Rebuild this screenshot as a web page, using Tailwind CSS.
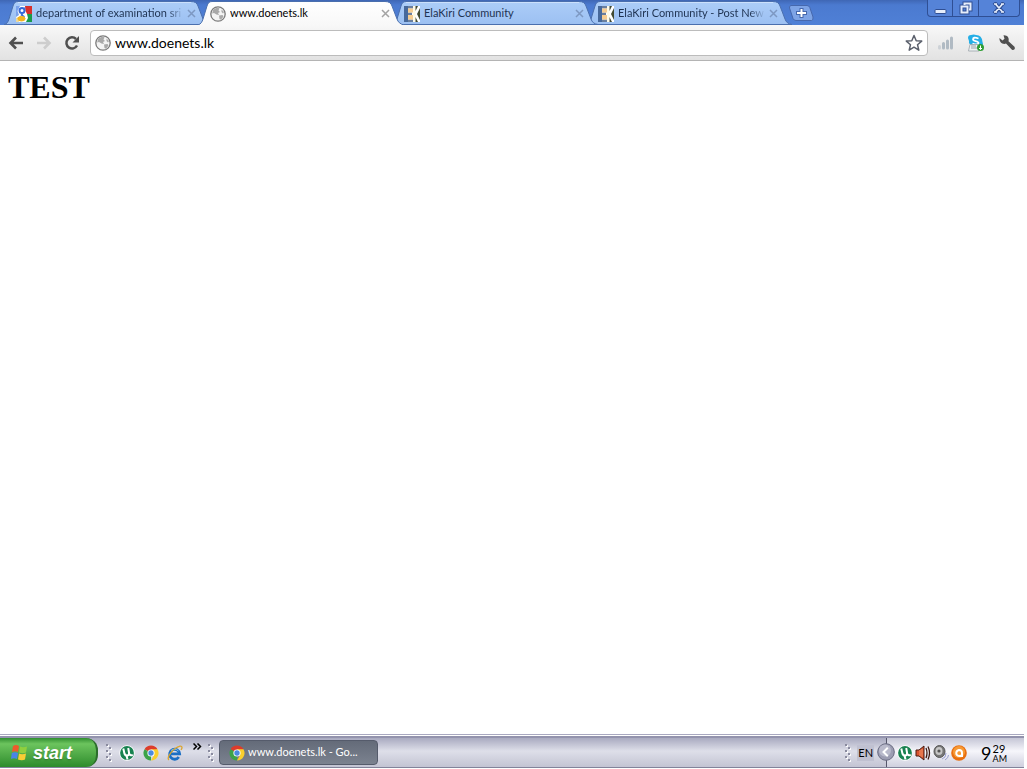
<!DOCTYPE html>
<html lang="en">
<head>
    <meta charset="UTF-8" />
    <meta name="viewport" content="width=device-width, initial-scale=1.0" />
    <title>www.doenets.lk</title>
    <script src="https://cdn.jsdelivr.net/npm/@tailwindcss/browser@4"></script>
</head>
<body class="min-h-screen flex flex-col bg-white pr-[3px] pb-px overflow-hidden font-[Lato,sans-serif]">

<!-- shared shapes -->
<svg class="absolute size-0">
    <defs>
        <linearGradient id="tab-blue" x1="0" y1="0" x2="0" y2="1">
            <stop offset="0" stop-color="#accdf8" />
            <stop offset="1" stop-color="#9cc0f2" />
        </linearGradient>
        <linearGradient id="tab-white" x1="0" y1="0" x2="0" y2="1">
            <stop offset="0" stop-color="#ffffff" />
            <stop offset="1" stop-color="#f8f8f8" />
        </linearGradient>
        <symbol id="tab" viewBox="0 0 206 25">
            <path d="M0 24.500 C3 24 4 22 5 19 L9 6 C10 3 11 1.500 14 1.500 H187 C191 1.500 193 3 194 6 L199 19 C200 22 202 24 206 24.500 Z" stroke="#4a6fae" stroke-width="1" />
            <path d="M14 2.500 H187" stroke="#d3e5fd" stroke-opacity=".8" fill="none" />
        </symbol>
        <symbol id="tab-active" viewBox="0 0 206 25">
            <path d="M0 25 C3 24 4 22 5 19 L9 6 C10 3 11 1.500 14 1.500 H187 C191 1.500 193 3 194 6 L199 19 C200 22 202 24 206 25" stroke="#4a6fae" stroke-width="1" />
        </symbol>
        <symbol id="globe" viewBox="0 0 16 16">
            <circle cx="8" cy="8" r="7.200" fill="#f4f4f4" stroke="#7b7b7b" stroke-width="1.300" />
            <path d="M3 4 C5 2 8 1.600 9.500 2.500 L8.500 4.500 L10 6 L8 7 L9 9 L6.500 8.500 L4 7 L2.200 7.500 Z M9 9.500 L12.500 9 L13.500 10.500 L11 13.800 L9.500 13 Z M11.500 3.500 L14 6 L13 7.500 L11.500 6 Z" fill="#a9a9a9" />
        </symbol>
        <symbol id="ek" viewBox="0 0 16 16">
            <rect width="16" height="16" fill="#fff" />
            <path d="M0 0 H4 V16 H0 Z" fill="#47699b" />
            <path d="M4 0 H9 V2.500 H4 Z M4 6.500 H8 V9 H4 Z M4 13.500 H9 V16 H4 Z" fill="#6a7f9e" />
            <path d="M4 2.500 H9 V6.500 H4 Z M4 9 H9 V13.500 H4 Z" fill="#f6cd92" />
            <path d="M9 0 H11.500 V16 H9 Z" fill="#fffbe8" />
            <path d="M11.500 0 H14 L11.500 5 Z M16 2 V14 L13 8 Z M11.500 16 V11 L14 16 Z" fill="#424a32" />
        </symbol>
        <symbol id="close" viewBox="0 0 9 9">
            <path d="M1 1 L8 8 M8 1 L1 8" stroke="currentColor" stroke-width="1.500" />
        </symbol>
        <symbol id="chrome" viewBox="0 0 16 16">
            <path d="M8 8 L1.500 4.250 A7.500 7.500 0 0 1 14.500 4.250 Z" fill="#dd3c2b" />
            <path d="M8 8 L8 15.500 A7.500 7.500 0 0 1 1.500 4.250 Z" fill="#3da349" />
            <path d="M8 4.250 H14.500 A7.500 7.500 0 0 1 8 15.500 L11.200 9.800 Z" fill="#f9cf2d" />
            <circle cx="8" cy="8" r="3.600" fill="#fff" />
            <circle cx="8" cy="8" r="2.700" fill="#4a8be0" />
        </symbol>
        <symbol id="utorrent" viewBox="0 0 16 16">
            <circle cx="8" cy="8" r="7.700" fill="#fff" />
            <circle cx="8" cy="8" r="6.900" fill="#188250" />
            <path d="M4.300 3.500 L5.300 8 Q6 11 8.500 10.500 Q10.500 10 10 7.500 L9.200 3 M10 8 Q10.800 11 13.800 10 M7.500 10.500 L8.500 14.500" stroke="#fff" stroke-width="2" fill="none" />
        </symbol>
        <symbol id="grip" viewBox="0 0 6 20">
            <path d="M1 2h2v2h-2z M4 5h2v2h-2z M1 8h2v2h-2z M4 11h2v2h-2z M1 14h2v2h-2z M4 17h2v2h-2z" fill="#fff" fill-opacity=".9" />
            <path d="M0 1h2v2h-2z M3 4h2v2h-2z M0 7h2v2h-2z M3 10h2v2h-2z M0 13h2v2h-2z M3 16h2v2h-2z" fill="#8a8b9f" />
        </symbol>
    </defs>
</svg>

<!-- tab strip -->
<header class="flex h-[25px] items-start bg-linear-to-b from-[#3f67b5] via-[#4b7ad0] via-20% to-[#4f80d6] pl-1">
    <nav class="flex text-[11px] text-[#1f3352]">
        <div class="relative z-30 flex h-[25px] w-[206px] items-center gap-1 pt-0.5 pr-[14px] pl-3">
            <svg class="absolute inset-0 h-full w-full" fill="url(#tab-blue)"><use href="#tab" /></svg>
            <svg class="relative size-4 shrink-0" viewBox="0 0 16 16">
                <rect width="16" height="16" fill="#fff" />
                <path d="M0 0 H4 L1.500 5 L3 9 L0 11 Z" fill="#7ba3ec" />
                <path d="M9 0 H16 V8 H11 L9.500 5 Z" fill="#d9302c" />
                <path d="M11 8 H16 V16 H10 L12 12 Z" fill="#1a9a4b" />
                <path d="M0 12 L2 11 L3 16 H0 Z" fill="#e9d9a0" />
                <path d="M8 2 H9.500" stroke="#3569d8" />
                <circle cx="6" cy="4.500" r="2.500" fill="#fff" stroke="#3569d8" stroke-width="2" />
                <path d="M6.500 7.500 L5.500 9 L8.500 10.800" stroke="#3569d8" stroke-width="1.500" fill="none" />
                <ellipse cx="5.500" cy="12.700" rx="3.600" ry="2.300" fill="#f3b41f" stroke="#f3b41f" />
            </svg>
            <a href="#" class="relative min-w-0 flex-1 overflow-hidden whitespace-nowrap mask-r-from-90%">department of examination sri</a>
            <button aria-label="Close tab" class="relative text-[#7d98c2]"><svg class="size-[9px]"><use href="#close" /></svg></button>
        </div>
        <div class="relative z-40 -ml-3 flex h-[25px] w-[206px] items-center gap-1 pt-0.5 pr-[14px] pl-3 text-black">
            <svg class="absolute inset-0 h-full w-full" fill="url(#tab-white)"><use href="#tab-active" /></svg>
            <svg class="relative size-4 shrink-0"><use href="#globe" /></svg>
            <a href="#" class="relative min-w-0 flex-1 overflow-hidden whitespace-nowrap">www.doenets.lk</a>
            <button aria-label="Close tab" class="relative text-[#a3a3a3]"><svg class="size-[9px]"><use href="#close" /></svg></button>
        </div>
        <div class="relative z-20 -ml-3 flex h-[25px] w-[206px] items-center gap-1 pt-0.5 pr-[14px] pl-3">
            <svg class="absolute inset-0 h-full w-full" fill="url(#tab-blue)"><use href="#tab" /></svg>
            <svg class="relative size-4 shrink-0"><use href="#ek" /></svg>
            <a href="#" class="relative min-w-0 flex-1 overflow-hidden whitespace-nowrap">ElaKiri Community</a>
            <button aria-label="Close tab" class="relative text-[#7d98c2]"><svg class="size-[9px]"><use href="#close" /></svg></button>
        </div>
        <div class="relative z-10 -ml-3 flex h-[25px] w-[206px] items-center gap-1 pt-0.5 pr-[14px] pl-3">
            <svg class="absolute inset-0 h-full w-full" fill="url(#tab-blue)"><use href="#tab" /></svg>
            <svg class="relative size-4 shrink-0"><use href="#ek" /></svg>
            <a href="#" class="relative min-w-0 flex-1 overflow-hidden whitespace-nowrap mask-r-from-90%">ElaKiri Community - Post New T</a>
            <button aria-label="Close tab" class="relative text-[#7d98c2]"><svg class="size-[9px]"><use href="#close" /></svg></button>
        </div>
    </nav>
    <button aria-label="New tab" class="-ml-1 mt-[5px]">
        <svg class="h-4 w-[26px]" viewBox="0 0 26 16">
            <path d="M3 .5 H19 Q21 .5 21.800 2.500 L25 12 Q25.500 15 23.500 15.500 H8 Q6 15.500 5 13.500 L1.500 3 Q1 1 3 .5 Z" fill="#7ea4e6" stroke="#4668ad" />
            <path d="M8 8 H19 M13.500 3 V13" stroke="#4668ad" stroke-width="4" />
            <path d="M9 8 H18 M13.500 4 V12" stroke="#fff" stroke-width="2" />
        </svg>
    </button>
    <div class="ml-auto mr-1 flex h-[17px] divide-x divide-[#2f4f94] rounded-b border border-t-0 border-[#2f4f94] bg-[#5583d8]">
        <button aria-label="Minimize" class="flex w-[25px] items-center justify-center">
            <svg class="h-[14px] w-[13px]" viewBox="0 0 13 14"><rect x="1" y="8.500" width="11" height="4" rx="1" fill="#e6eefb" stroke="#2f4f94" /></svg>
        </button>
        <button aria-label="Restore" class="flex w-[26px] items-center justify-center">
            <svg class="size-[14px]" viewBox="0 0 14 14" fill="none">
                <path d="M5.500 4 V2.500 H11.500 V8.500 H10 M2.500 5.500 H8.500 V11.500 H2.500 Z" stroke="#2f4f94" stroke-width="4" />
                <path d="M5.500 4 V2.500 H11.500 V8.500 H10 M2.500 5.500 H8.500 V11.500 H2.500 Z" stroke="#e6eefb" stroke-width="2" />
            </svg>
        </button>
        <button aria-label="Close window" class="flex w-10 items-center justify-center">
            <svg class="h-3 w-[14px]" viewBox="0 0 14 12" fill="none">
                <path d="M3.500 2 L10.500 10 M10.500 2 L3.500 10" stroke="#2f4f94" stroke-width="4" stroke-linecap="square" />
                <path d="M3.500 2 L10.500 10 M10.500 2 L3.500 10 M2 2 H5 M9 2 H12 M2 10 H5 M9 10 H12" stroke="#e6eefb" stroke-width="1.700" />
            </svg>
        </button>
    </div>
</header>

<!-- toolbar -->
<form class="flex h-9 items-center border-b border-[#b4b4b4] bg-linear-to-b from-[#f8f8f8] to-[#e2e2e2] px-2">
    <button type="button" aria-label="Back" class="mr-3">
        <svg class="size-4" viewBox="0 0 16 16" fill="none" stroke="#505050" stroke-width="2.600"><path d="M2.500 8 H15 M8 2.500 L2.500 8 L8 13.500" /></svg>
    </button>
    <button type="button" aria-label="Forward" class="mr-3">
        <svg class="size-4" viewBox="0 0 16 16" fill="none" stroke="#cdcdcd" stroke-width="2.600"><path d="M1 8 H13.500 M8 2.500 L13.500 8 L8 13.500" /></svg>
    </button>
    <button type="button" aria-label="Reload" class="mr-[10px]">
        <svg class="size-4" viewBox="0 0 16 16"><path d="M13 10.500 A5.600 5.600 0 1 1 12 4" fill="none" stroke="#505050" stroke-width="2.500" /><path d="M15 1 V7.500 H8.500 Z" fill="#505050" /></svg>
    </button>
    <div class="flex h-[26px] flex-1 items-center gap-1 rounded border border-[#bcbcbc] bg-white px-1">
        <svg class="size-4 shrink-0"><use href="#globe" /></svg>
        <input aria-label="Address" value="www.doenets.lk" class="min-w-0 flex-1 text-[14px] text-black outline-none" />
        <button type="button" aria-label="Bookmark this page">
            <svg class="size-[18px]" viewBox="0 0 18 18"><path d="M9 1.500 L11.200 6.700 L16.700 7.100 L12.500 10.700 L13.800 16.200 L9 13.200 L4.200 16.200 L5.500 10.700 L1.300 7.100 L6.800 6.700 Z" fill="#fff" stroke="#5b606c" stroke-width="1.500" stroke-linejoin="round" /></svg>
        </button>
    </div>
    <button type="button" aria-label="Signal" class="ml-[10px]">
        <svg class="size-4" viewBox="0 0 16 16" fill="none" stroke="#b0bac3" stroke-width="3" stroke-linecap="round"><path d="M1.500 11.500 V13" stroke-opacity=".5" /><path d="M5.500 8.500 V13 M9.500 6 V13 M13.500 3 V13" /></svg>
    </button>
    <button type="button" aria-label="Skype" class="ml-[13px]">
        <svg class="size-[18px]" viewBox="0 0 18 18">
            <path d="M1 4 Q1 1 4 1 Q7 0 9 1 Q15 1 15.500 8 Q17 12 14 13 Q9 14 7 12 Q1 11 2 7 Z" fill="#24aee6" />
            <path d="M11.500 4.500 Q6 2.500 6 5.500 C6 7.500 11.500 6.500 11.500 9 Q11 11.500 5.500 9.500" stroke="#fff" stroke-width="1.800" fill="none" />
            <path d="M3 10.500 H11 V14 H14 L12 17 H1.500 Z" fill="#eef2f4" stroke="#9aa3aa" stroke-width=".8" />
            <path d="M4 12 H9 M4 14 H11" stroke="#9aa3aa" />
            <circle cx="13.500" cy="13.500" r="3.500" fill="#2f9e35" />
            <path d="M13.500 11.500 V15.500 M12 14 L13.500 15.500 L15 14" stroke="#fff" fill="none" />
        </svg>
    </button>
    <button type="button" aria-label="Settings" class="ml-[13px]">
        <svg class="size-[18px]" viewBox="0 0 18 18"><path d="M1.500 4 L4.500 6.500 L6.500 4.800 L5.500 1.300 C9.500 1 11.500 4 10.500 7.300 L16.500 12.800 Q17.500 14.500 16.300 15.600 Q15 16.600 13.700 15.400 L8 9.600 C4.500 10.800 1 8 1.500 4 Z" fill="#505050" /></svg>
    </button>
</form>

<!-- page -->
<main class="flex-1 px-2 pt-2">
    <h1 class="font-['Liberation_Serif',serif] text-[32px] leading-9 font-bold text-black">TEST</h1>
</main>

<!-- taskbar -->
<footer class="border-t border-[#a9a9c0] pt-px">
    <div class="flex h-8 items-stretch border-t-2 border-b border-t-[#9393ad] border-b-[#82839a] bg-linear-to-b from-[#a9aac0] via-[#dedfe9] via-45% to-[#c3c4d3]">
        <button class="flex w-[98px] items-center gap-1 rounded-r-xl border-r-2 border-[#2c6e2c] bg-linear-to-b from-[#2f8f30] via-[#6cc45e] via-20% to-[#2c8c2c] pl-[10px]">
            <svg class="size-[19px]" viewBox="0 0 19 19">
                <path d="M3 3 Q6 1 9 3 L8 9 Q5 7.500 2 9 Z" fill="#ee5a2c" />
                <path d="M10 3.500 Q13 5 17 3.500 L16 9.500 Q13 11 9 9.500 Z" fill="#90cf3e" />
                <path d="M1.800 10 Q5 8.500 8 10 L7 16 Q4 14.500 1 16 Z" fill="#4b84e6" />
                <path d="M9 10.500 Q12 12 16 10.500 L15 16.500 Q12 18 8 16.500 Z" fill="#f8cd35" />
            </svg>
            <span class="font-['Liberation_Sans',sans-serif] text-[18px] leading-6 font-bold text-white italic text-shadow-sm">start</span>
        </button>
        <div class="flex items-center pl-2">
            <svg class="h-5 w-1.5"><use href="#grip" /></svg>
            <button aria-label="uTorrent" class="ml-[7px]"><svg class="size-4"><use href="#utorrent" /></svg></button>
            <button aria-label="Google Chrome" class="ml-2"><svg class="size-4"><use href="#chrome" /></svg></button>
            <button aria-label="Internet Explorer" class="ml-2">
                <svg class="size-4" viewBox="0 0 16 16" fill="none">
                    <path d="M3 8.800 H12.600 A5 5 0 1 0 11.800 12" stroke="#1b6fc4" stroke-width="2.800" />
                    <path d="M4 5.500 Q8 2.500 11.500 6" stroke="#7fc3f3" />
                    <path d="M2 15 C-1 12.500 6 3 13 1.200 C16 .8 15 3.500 14 5" stroke="#dba52f" stroke-width="1.300" />
                </svg>
            </button>
            <button aria-label="More" class="-mt-3 ml-[10px]">
                <svg class="h-[7px] w-[9px]" viewBox="0 0 9 7"><path d="M.5 .5 L3.500 3.500 L.5 6.500 M4.500 .5 L7.500 3.500 L4.500 6.500" fill="none" stroke="#000" stroke-width="1.500" /></svg>
            </button>
            <svg class="ml-1.5 h-5 w-1.5"><use href="#grip" /></svg>
        </div>
        <button class="my-0.5 ml-[5px] flex w-[159px] items-center gap-[3px] rounded-sm border border-[#555b6b] bg-linear-to-b from-[#646b79] to-[#7b828f] pl-[9px] text-[11px] text-white">
            <svg class="size-4"><use href="#chrome" /></svg>
            www.doenets.lk - Go...
        </button>
        <div class="ml-auto flex items-center">
            <svg class="h-5 w-1.5"><use href="#grip" /></svg>
            <button class="ml-1.5 mr-3 bg-[#c0c1d1] px-px text-[11px] leading-4 text-black">EN</button>
        </div>
        <div class="relative flex items-center border-l border-[#55566a] bg-linear-to-b from-[#c5c6d6] via-[#f6f6fb] via-45% to-[#cfd0de] pl-[10px] pr-[17px]">
            <button aria-label="Show hidden icons" class="absolute top-[5px] -left-2.5">
                <svg class="size-[18px]" viewBox="0 0 18 18"><circle cx="9" cy="9" r="8.300" fill="#9c9db2" stroke="#686a80" /><circle cx="8" cy="7.500" r="6" fill="#b9bacb" /><path d="M10.800 4.800 L6.500 9 L10.800 13.200" fill="none" stroke="#fff" stroke-width="2" /></svg>
            </button>
            <div class="flex items-center gap-0.5">
                <svg class="size-4"><use href="#utorrent" /></svg>
                <svg class="size-4" viewBox="0 0 16 16"><path d="M1 5 H4 L9 1 V15 L4 11 H1 Z" fill="#d9532f" stroke="#4a1d12" /><path d="M5 5 V11 M7 4 V12" stroke="#f39a6c" /><path d="M11 3 Q13 8 11 13 M13 1.500 Q16 8 13 14.500" stroke="#3e1a12" stroke-width="1.300" fill="none" /></svg>
                <svg class="size-4" viewBox="0 0 16 16"><ellipse cx="6.500" cy="6.500" rx="5.500" ry="6" fill="#777" stroke="#555" /><ellipse cx="6" cy="6" rx="3.500" ry="4" fill="#c6c6c6" /><circle cx="6" cy="6" r="1.600" fill="#555" /><path d="M9 14 Q13 13 13 8 M12 15 Q15.500 13 15.500 10" stroke="#9aa0cf" fill="none" /></svg>
                <svg class="size-4" viewBox="0 0 16 16"><circle cx="8" cy="8" r="7.800" fill="#e86f10" /><circle cx="8" cy="7" r="6" fill="#f79a35" /><path d="M10.500 10.500 Q7 12 5.500 9.500 Q4.500 6 8 5 Q11 5 11 8 V12" stroke="#fff" stroke-width="2" fill="none" /></svg>
            </div>
            <div class="ml-[14px] flex items-center gap-px text-black">
                <span class="text-[18px] leading-6">9</span>
                <span class="flex flex-col">
                    <span class="text-[11px] leading-[11px]">29</span>
                    <span class="text-[9px] leading-[9px]">AM</span>
                </span>
            </div>
        </div>
    </div>
</footer>

</body>
</html>
